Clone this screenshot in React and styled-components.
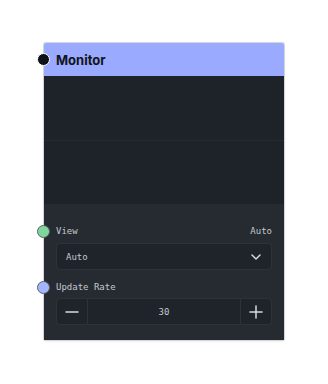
import React from 'react';
import styled, { createGlobalStyle } from 'styled-components';

const GlobalStyle = createGlobalStyle`
  body {
    margin: 0;
    background: #ffffff;
    font-family: Inter, "Noto Sans", sans-serif;
  }
`;

const Page = styled.div`
  width: 328px;
  height: 384px;
  padding: 43px 0 0 44px;
  box-sizing: border-box;
`;

const Node = styled.div`
  position: relative;
  width: 240px;
  box-shadow: 0 0 0 1px #d4d6da, 0 1px 3px rgba(0, 0, 0, 0.12);
  border-radius: 2px;
`;

const Header = styled.div`
  height: 33px;
  background: #99aaff;
  display: flex;
  align-items: center;
  padding-left: 12px;
  font-size: 13px;
  font-weight: 700;
  color: #111418;
  border-radius: 2px 2px 0 0;
`;

const Handle = styled.span`
  position: absolute;
  left: -7px;
  top: ${(p) => p.$top}px;
  width: 11px;
  height: 11px;
  border-radius: 50%;
  background: ${(p) => p.$color};
  border: 1.5px solid ${(p) => p.$ring};
`;

const Preview = styled.div`
  background: #1e2329;
  display: flex;
  flex-direction: column;
`;

const PreviewSlot = styled.div`
  height: 64px;
  & + & {
    border-top: 1px solid #262b31;
    height: 63px;
  }
`;

const Controls = styled.div`
  background: #262b31;
  padding: 18px 12px 15px;
  display: flex;
  flex-direction: column;
  font-family: "DejaVu Sans Mono", "Liberation Mono", monospace;
  font-size: 9px;
  color: #c3c8cf;
`;

const LabelRow = styled.div`
  height: 18px;
  display: flex;
  align-items: center;
  justify-content: space-between;
  margin-top: ${(p) => p.$gap || 0}px;
  margin-bottom: ${(p) => p.$after || 0}px;
`;

const Select = styled.div`
  height: 27px;
  box-sizing: border-box;
  border: 1px solid #2c3238;
  border-radius: 4px;
  background: #1f242a;
  display: flex;
  align-items: center;
  justify-content: space-between;
  padding: 0 9px 0 9px;
`;

const Stepper = styled.div`
  height: 27px;
  box-sizing: border-box;
  border: 1px solid #2c3238;
  border-radius: 4px;
  background: #1f242a;
  display: grid;
  grid-template-columns: 31px 1fr 31px;
`;

const StepButton = styled.div`
  display: flex;
  align-items: center;
  justify-content: center;
  color: #d6dae0;
  border-left: ${(p) => (p.$side === 'right' ? '1px solid #2c3238' : 'none')};
  border-right: ${(p) => (p.$side === 'left' ? '1px solid #2c3238' : 'none')};
`;

const Value = styled.div`
  display: flex;
  align-items: center;
  justify-content: center;
  color: #c3c8cf;
`;

export default function App() {
  return (
    <>
      <GlobalStyle />
      <Page>
        <Node>
          <Handle $top={10} $color="#0f1216" $ring="#ffffff" />
          <Header>Monitor</Header>
          <Preview>
            <PreviewSlot />
            <PreviewSlot />
          </Preview>
          <Controls>
            <LabelRow $after={3}>
              <span>View</span>
              <span>Auto</span>
            </LabelRow>
            <Select>
              <span>Auto</span>
              <svg width="12" height="12" viewBox="0 0 12 12" fill="none">
                <path d="M2 4l4 4 4-4" stroke="#d6dae0" strokeWidth="1.5" strokeLinecap="round" strokeLinejoin="round" />
              </svg>
            </Select>
            <LabelRow $gap={8} $after={2}>
              <span>Update Rate</span>
            </LabelRow>
            <Stepper>
              <StepButton $side="left">
                <svg width="14" height="14" viewBox="0 0 14 14">
                  <path d="M1 7h12" stroke="#d6dae0" strokeWidth="1.5" strokeLinecap="round" />
                </svg>
              </StepButton>
              <Value>30</Value>
              <StepButton $side="right">
                <svg width="14" height="14" viewBox="0 0 14 14">
                  <path d="M1 7h12M7 1v12" stroke="#d6dae0" strokeWidth="1.5" strokeLinecap="round" />
                </svg>
              </StepButton>
            </Stepper>
          </Controls>
          <Handle $top={182} $color="#7fd69c" $ring="#5b6168" />
          <Handle $top={238} $color="#a3b5ff" $ring="#5b6168" />
        </Node>
      </Page>
    </>
  );
}
